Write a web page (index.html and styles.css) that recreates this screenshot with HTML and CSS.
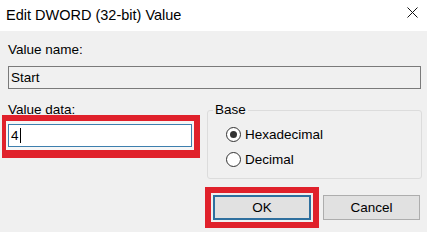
FILE: index.html
```html
<!DOCTYPE html>
<html lang="en">

<head>
    <meta charset="UTF-8">
    <meta name="viewport" content="width=device-width, initial-scale=1.0">
    <link rel="stylesheet" href="styles.css">
</head>

<body>

    <div id="dialog">
        <div id="titlebar">
            <span class="title">Edit DWORD (32-bit) Value</span>
            <svg class="close" width="11" height="11" viewBox="0 0 11 11">
                <path d="M0.5 0.5 L10.5 10.5 M10.5 0.5 L0.5 10.5" stroke="#111" stroke-width="1" fill="none" />
            </svg>
        </div>

        <div id="content">
            <div class="label">Value name:</div>
            <div class="textbox readonly">Start</div>

            <div class="row">
                <div class="data-col">
                    <div class="label">Value data:</div>
                    <div class="mark mark-input">
                        <div class="textbox focused">4<span class="caret"></span></div>
                    </div>
                </div>

                <fieldset class="base">
                    <legend>Base</legend>
                    <div class="radio-row"><span class="radio checked"></span>Hexadecimal</div>
                    <div class="radio-row"><span class="radio"></span>Decimal</div>
                </fieldset>
            </div>

            <div class="buttons">
                <div class="mark mark-button">
                    <div class="button default">OK</div>
                </div>
                <div class="button cancel">Cancel</div>
            </div>
        </div>
    </div>

</body>

</html>
```

FILE: styles.css
```css
body {
    margin: 0;
    padding: 0;
    font-family: "Liberation Sans", Arial, sans-serif;
    font-size: 13.5px;
    color: #000;
    background-color: #f0f0f0;
}

#dialog {
    width: 427px;
    height: 232px;
    overflow: hidden;
}

#titlebar {
    height: 31px;
    box-sizing: border-box;
    padding: 0 9px 0 6px;
    background-color: #fff;
    display: flex;
    justify-content: space-between;
}

.title {
    font-size: 14.5px;
    line-height: 31px;
}

.close {
    margin-top: 7px;
}

#content {
    height: 201px;
    box-sizing: border-box;
    padding: 11px 5px 0 8px;
    background-color: #f0f0f0;
}

.label {
    line-height: 16px;
}

.textbox {
    height: 23px;
    box-sizing: border-box;
    border: 1px solid #7a7a7a;
    padding: 0 2px;
    display: flex;
    align-items: center;
}

.readonly {
    margin-top: 8px;
    margin-right: 1px;
    background-color: #f0f0f0;
}

.row {
    display: flex;
    align-items: flex-start;
    gap: 15px;
    margin-top: 13px;
}

.data-col {
    width: 184px;
}

/* red annotation boxes drawn round the input and the OK button */
.mark {
    border-style: solid;
    border-color: #e0212b;
}

.mark-input {
    border-width: 6px 6px 8px 4px;
    padding: 3px 2px;
    margin: -3px -8px 0 -6px;
    background-color: #f6f6f6;
}

.focused {
    border-color: #3d7fae;
    background-color: #fff;
}

.caret {
    width: 1px;
    height: 15px;
    margin-left: 1px;
    background-color: #000;
}

.base {
    width: 215px;
    min-width: 0;
    box-sizing: border-box;
    margin: 0;
    padding: 4px 5px 6px 5px;
    border: 1px solid #dcdcdc;
    border-radius: 3px;
}

.base legend {
    padding: 0 2px;
    line-height: 16px;
}

.radio-row {
    display: flex;
    align-items: center;
    height: 25px;
    margin-left: 13px;
}

.radio {
    width: 15px;
    height: 15px;
    box-sizing: border-box;
    margin-right: 4px;
    border: 1px solid #333;
    border-radius: 50%;
    background-color: #fff;
    display: flex;
    align-items: center;
    justify-content: center;
}

.radio.checked::after {
    content: '';
    width: 7px;
    height: 7px;
    border-radius: 50%;
    background-color: #333;
}

.buttons {
    display: flex;
    justify-content: flex-end;
    gap: 12px;
    margin-top: 16px;
    margin-right: 2px;
}

.mark-button {
    border-width: 6px;
    padding: 2px;
    margin: -8px;
}

.button {
    width: 98px;
    height: 25px;
    box-sizing: border-box;
    border: 1px solid #adadad;
    background-color: #e1e1e1;
    display: flex;
    align-items: center;
    justify-content: center;
}

.button.default {
    border: 2px solid #2e6f9e;
}

.button.cancel {
    width: 97px;
}
```
